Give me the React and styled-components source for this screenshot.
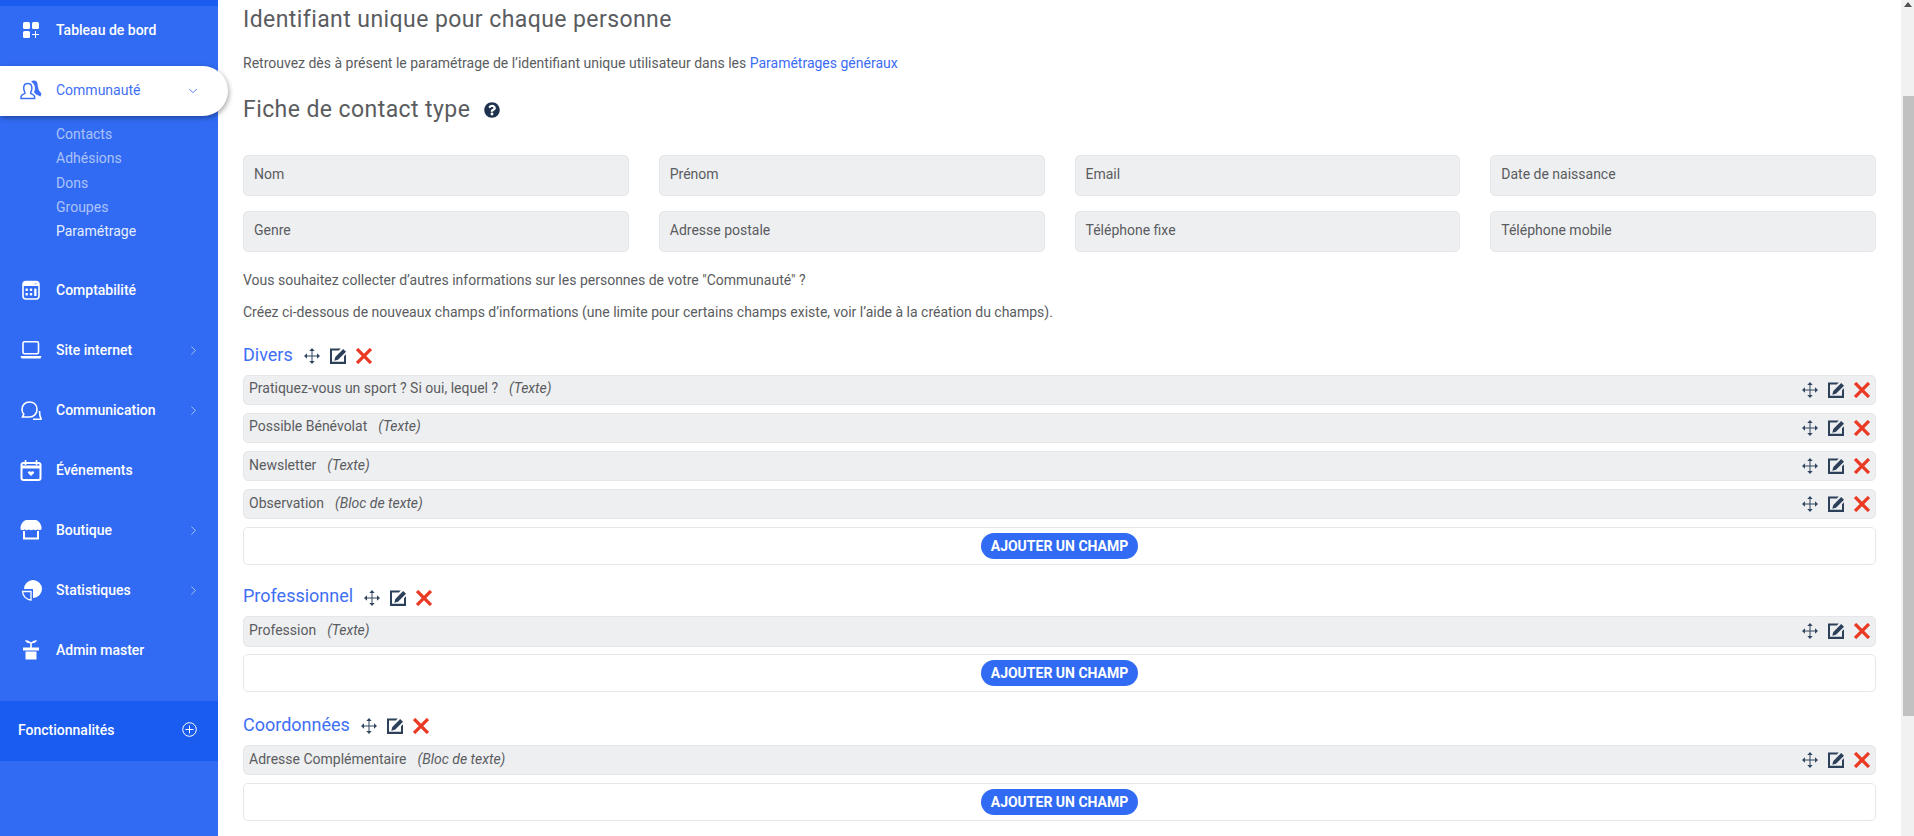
import React from 'react';
import styled, { createGlobalStyle } from 'styled-components';
import { ChevronRight, ChevronDown } from 'lucide-react';
import { FaQuestionCircle } from 'react-icons/fa';

const Global = createGlobalStyle`
  html, body { margin: 0; padding: 0; height: 836px; overflow: hidden; background: #fff; }
  body { font-family: Roboto, "Liberation Sans", sans-serif; }
`;

const Page = styled.div`display: flex; height: 836px; overflow: hidden; position: relative;`;
const Sidebar = styled.aside`width: 218px; flex: none; background: #316bf3; display: flex; flex-direction: column; position: relative; z-index: 1;`;
const Strip = styled.div`height: 6px; background: #1a5cf0; margin-bottom: -1px;`;
const Nav = styled.nav`display: flex; flex-direction: column; gap: 10px;`;
const Item = styled.div`
  height: 50px; display: flex; align-items: center; padding-left: 20px; color: ${p => p.$active ? '#3f6ff5' : '#fff'};
  font-size: 14px; font-weight: 500; position: relative; box-sizing: border-box;
  ${p => p.$active && `background: #fff; width: 228px; margin: 1px 0 -1px; padding-bottom: 2px; border-radius: 0 25px 25px 0; box-shadow: 1px 2px 5px rgba(0,0,0,.35); font-weight: 400;`}
`;
const IconSlot = styled.span`width: 36px; flex: none; display: flex; align-items: center; svg { display: block; width: 22px; height: 22px; }`;
const Label = styled.span`flex: 1;`;
const Chev = styled.span`position: absolute; left: 183px; width: 20px; top: 0; bottom: 0; display: flex; align-items: center; justify-content: center; opacity: ${p => p.$open ? 1 : .65};`;
const SubList = styled.div`display: flex; flex-direction: column; margin-top: -3px; padding: 0 0 22px 56px; margin-bottom: -10px;`;
const SubItem = styled.div`height: 24.3px; line-height: 24.3px; font-size: 14px; color: ${p => p.$on ? 'rgba(255,255,255,.9)' : 'rgba(255,255,255,.6)'};`;
const Feature = styled.div`height: 60px; box-sizing: border-box; background: #1a5cf0; margin-top: 25.5px; display: flex; align-items: center; justify-content: space-between; padding: 0 21px 2px 18px; color: #fff; font-size: 14px; font-weight: 500;`;

const Main = styled.main`flex: 1; min-width: 0; padding: 0 38px 0 25px; color: #5a5c60; font-size: 14px;`;
const Title = styled.h2`margin: 0; font-weight: 400; font-size: 23px; line-height: 40px; letter-spacing: .42px;`;
const Para = styled.p`margin: ${p => p.$m || '0'}; line-height: 20px; font-size: 14px;`;
const Link = styled.a`color: #3b6cf5;`;
const FicheTitle = styled(Title)`display: flex; align-items: center; gap: 14px; margin-top: 17px; svg { color: #1e3250; font-size: 16px; }`;
const FieldGrid = styled.div`display: grid; grid-template-columns: repeat(4, 1fr); gap: 15.5px 30px; margin: 25px 0 18px;`;
const Field = styled.div`height: 40.5px; box-sizing: border-box; background: #eeeff1; border: 1px solid #e6e7ea; border-radius: 5px; padding: 0 10px 3px; display: flex; align-items: center;`;
const Section = styled.section`margin-top: ${p => p.$mt};`;
const SecHead = styled.div`display: flex; align-items: center; gap: 11px; height: 30px; box-sizing: border-box; padding-top: 5px; margin-bottom: 6px;`;
const SecName = styled.span`color: #3f6ff5; font-size: 18px; margin-top: -4px;`;
const Row = styled.div`height: 30.4px; box-sizing: border-box; background: #eeeff1; border: 1px solid #e6e7ea; border-radius: 5px; padding: 0 5px 0 5px; margin-bottom: 7.8px; display: flex; align-items: center; justify-content: space-between;`;
const RowText = styled.span`display: flex; gap: 11px; margin-top: -3px;`;
const Kind = styled.em`font-style: italic;`;
const Actions = styled.span`display: flex; align-items: center; gap: 10px;`;
const AddBox = styled.div`height: 38px; box-sizing: border-box; border: 1px solid #e6e7ea; border-radius: 5px; display: flex; align-items: center; justify-content: center;`;
const AddBtn = styled.button`height: 26px; width: 157px; padding: 0; border: none; border-radius: 13px; background: #316bf3; color: #fff; font: 700 14px Roboto, sans-serif;`;

const Scrollbar = styled.div`position: absolute; right: 0; top: 0; bottom: 0; width: 13px; background: #f1f1f1; display: flex; flex-direction: column;`;
const Arrow = styled.div`height: 96px; display: flex; justify-content: center; padding-top: 2px; box-sizing: border-box; &::before { content: ''; margin-top: 0; width: 0; height: 0; border: 4px solid transparent; border-top: none; border-bottom: 5px solid #505050; }`;
const Thumb = styled.div`height: 620px; margin-left: 2px; background: #c1c1c1;`;

const S = { fill: 'none', stroke: '#fff', strokeWidth: 1.6 };
const icons = {
  dash: <svg viewBox="0 0 22 22"><rect x="3" y="3" width="7" height="7" rx="1.5" fill="#fff"/><rect x="12" y="3" width="7" height="7" rx="1.5" fill="#fff"/><rect x="3" y="12" width="7" height="7" rx="1.5" fill="#fff"/><path d="M15.500 12v7M12 15.500h7" stroke="#fff" strokeWidth="1"/></svg>,
  comm: <svg viewBox="0 0 22 22"><path d="M1 19.500v-2c0-1.600 3-2.300 4-3.200.4-.9-1.300-2-1.300-5.200C3.700 6 5.500 4.500 7.800 4.500s4.100 1.500 4.100 4.600c0 3.200-1.700 4.300-1.300 5.200 1 .9 4 1.600 4 3.200v2z" fill="none" stroke="#3f6ff5" strokeWidth="1.500"/><path d="M11 3C13 .8 17 1 17.500 4.500c.3 2.500.5 5.500 1.800 7.500l2.200 2.500-1 3-5-2.500-1.500-2c1.800-3 1.200-8-2.500-10z" fill="#3f6ff5"/></svg>,
  calc: <svg viewBox="0 0 22 22"><rect x="3" y="2.500" width="16" height="17.500" rx="3" {...S}/><path d="M5 2.500h12a2 2 0 0 1 2 2V7H3V4.500a2 2 0 0 1 2-2z" fill="#fff"/><rect x="14.500" y="4" width="2" height="1.600" fill="#a9c0fa"/><g fill="#fff"><rect x="5.500" y="9.500" width="2.400" height="2.400" rx=".6"/><rect x="9.800" y="9.500" width="2.400" height="2.400" rx=".6"/><rect x="5.500" y="14" width="2.400" height="2.400" rx=".6"/><rect x="9.800" y="14" width="2.400" height="2.400" rx=".6"/><rect x="14.200" y="9.500" width="2.300" height="7.500" rx=".6"/></g></svg>,
  laptop: <svg viewBox="0 0 22 22"><rect x="3" y="2.800" width="15.500" height="12" rx="1.500" {...S}/><path d="M.5 17h21l-1 2.500h-19z" fill="#fff"/></svg>,
  chat: <svg viewBox="0 0 22 22"><path d="M2 10.500C2 6 5 3 9.500 3S17 6 17 10.500 13.500 18 9.500 18H2.500l1.300-2.800C2.600 14 2 12.500 2 10.500z" {...S}/><path d="M19.500 12c0 2.500.2 5.500 1.500 7.500v.8h-8" {...S}/></svg>,
  cal: <svg viewBox="0 0 22 22"><rect x="1.500" y="4" width="19" height="17" rx="2" {...S} strokeWidth="2"/><path d="M1.500 8h19" stroke="#fff" strokeWidth="3"/><path d="M5.500 1v5M16.500 1v5" stroke="#fff" strokeWidth="1.600"/><path d="M11 17l-3-3c-.8-1.600 2-2.600 3-1 1-1.600 3.800-.6 3 1z" fill="#fff"/></svg>,
  shop: <svg viewBox="0 0 22 22"><path d="M6 1h10c3 1 5 4 5.500 7v2c-.5 1.500-3.500 1.500-4 .3-.5 1.200-4 1.200-4 0-.5 1.200-4.500 1.200-5 0-.5 1.200-3.500 1.200-4 0-.5 1.200-3.500 1.200-4-.3V8C1 5 3 2 6 1z" fill="#fff"/><path d="M4 12v7.500h14V12" {...S} strokeWidth="2"/></svg>,
  pie: <svg viewBox="0 0 22 22"><path d="M4 10A9 9 0 1 1 13 19V10z" fill="#fff"/><path d="M2.500 12.500H11V21A9 9 0 0 1 2.500 12.500z" fill="none" stroke="#fff" strokeWidth="1.300"/></svg>,
  plant: <svg viewBox="0 0 22 22"><path d="M11 3v8" stroke="#fff" strokeWidth="1.600"/><path d="M11 4C9.500 2 7 1 5 1.500c1 2 3.500 3.500 6 2.500zM11 4c1.500-2 4-3 6-2.500-1 2-3.500 3.500-6 2.500z" fill="#fff"/><rect x="3" y="8.500" width="16" height="3" fill="#fff"/><path d="M5.500 12.500h11v8h-11z" fill="#fff"/></svg>,
};
const MoveIcon = () => <svg width="16" height="16" viewBox="0 0 16 16" fill="#32475f" style={{display:'block'}}><path d="M7.500 2.500h1v11h-1zM2.500 7.500h11v1h-11z"/><path d="M8 0l2.700 3H5.300zM8 16l-2.700-3h5.400zM0 8l3-2.700v5.400zM16 8l-3 2.700V5.300z"/></svg>;
const EditIcon = () => <svg width="16" height="16" viewBox="0 0 16 16" fill="#2d405a" style={{display:'block'}}><path d="M0 .5h10.800l-2 2H2v11.300h12V8.200l2-2V16H0z"/><path d="M13.200 1L16 3.800 8 11.800l-3.700 1 1-3.800z"/></svg>;
const DelIcon = () => <svg width="16" height="16" viewBox="0 0 16 16" style={{display:'block'}}><path d="M1.700 1.700l12.600 12.600M14.300 1.700L1.700 14.300" stroke="#ea3a24" strokeWidth="3.600" strokeLinecap="square" transform="translate(8 8) scale(.92) translate(-8 -8)"/></svg>;
const Acts = () => <Actions><MoveIcon/><EditIcon/><DelIcon/></Actions>;
const PlusIcon = () => <svg width="15" height="15" viewBox="0 0 15 15" fill="none" stroke="#fff" strokeWidth="1"><circle cx="7.500" cy="7.500" r="6.800"/><path d="M3.500 7.500h8M7.500 3.500v8"/></svg>;

const fields = ['Nom','Prénom','Email','Date de naissance','Genre','Adresse postale','Téléphone fixe','Téléphone mobile'];
const sections = [
  { name: 'Divers', mt: '17px', rows: [['Pratiquez-vous un sport ? Si oui, lequel ?','Texte'],['Possible Bénévolat','Texte'],['Newsletter','Texte'],['Observation','Bloc de texte']] },
  { name: 'Professionnel', mt: '15px', rows: [['Profession','Texte']] },
  { name: 'Coordonnées', mt: '16.4px', rows: [['Adresse Complémentaire','Bloc de texte']] },
];
const nav = [['dash','Tableau de bord'],['comm','Communauté','down'],['calc','Comptabilité'],['laptop','Site internet','right'],['chat','Communication','right'],['cal','Événements'],['shop','Boutique','right'],['pie','Statistiques','right'],['plant','Admin master']];
const subs = ['Contacts','Adhésions','Dons','Groupes','Paramétrage'];

export default function App() {
  return (
    <Page>
      <Global />
      <Sidebar>
        <Strip />
        <Nav>
          {nav.map(([ic, label, ch]) => (
            <React.Fragment key={label}>
              <Item $active={ch === 'down'}>
                <IconSlot>{icons[ic]}</IconSlot>
                <Label>{label}</Label>
                {ch === 'right' && <Chev><ChevronRight size={15} strokeWidth={1.4} /></Chev>}
                {ch === 'down' && <Chev $open><ChevronDown size={14} strokeWidth={1.5} /></Chev>}
              </Item>
              {ch === 'down' && <SubList>{subs.map((s, i) => <SubItem key={s} $on={i === 4}>{s}</SubItem>)}</SubList>}
            </React.Fragment>
          ))}
        </Nav>
        <Feature>Fonctionnalités <PlusIcon/></Feature>
      </Sidebar>
      <Main>
        <Title>Identifiant unique pour chaque personne</Title>
        <Para $m="13px 0 0">Retrouvez dès à présent le paramétrage de l’identifiant unique utilisateur dans les <Link>Paramétrages généraux</Link></Para>
        <FicheTitle>Fiche de contact type <FaQuestionCircle/></FicheTitle>
        <FieldGrid>{fields.map(f => <Field key={f}>{f}</Field>)}</FieldGrid>
        <Para>Vous souhaitez collecter d’autres informations sur les personnes de votre "Communauté" ?</Para>
        <Para $m="12px 0 0">Créez ci-dessous de nouveaux champs d’informations (une limite pour certains champs existe, voir l’aide à la création du champs).</Para>
        {sections.map((s) => (
          <Section key={s.name} $mt={s.mt}>
            <SecHead><SecName>{s.name}</SecName><Acts/></SecHead>
            {s.rows.map(([t, k]) => <Row key={t}><RowText>{t}<Kind>({k})</Kind></RowText><Acts/></Row>)}
            <AddBox><AddBtn>AJOUTER UN CHAMP</AddBtn></AddBox>
          </Section>
        ))}
      </Main>
      <Scrollbar><Arrow/><Thumb/></Scrollbar>
    </Page>
  );
}
